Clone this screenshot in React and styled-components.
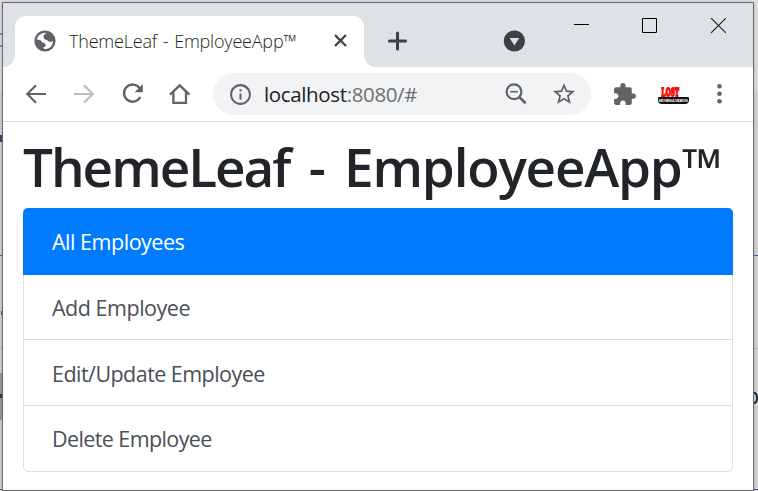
import React from 'react';
import styled, { createGlobalStyle } from 'styled-components';
import { MdExtension, MdStarBorder, MdInfoOutline } from 'react-icons/md';

const GlobalStyle = createGlobalStyle`
  * { box-sizing: border-box; }
  body { margin: 0; overflow: hidden; font-family: "Open Sans", "Noto Sans", sans-serif; }
`;

const Desktop = styled.div`
  position: relative;
  width: 758px;
  height: 491px;
  padding: 2px 4px 0 2px;
  overflow: hidden;
  background: linear-gradient(#e4e3e2 0, #dededd 90px, #d4d4d4 93px, #d4d4d4 100%);
`;

/* Slivers of the page lying behind the browser window. */
const Sliver = styled.span`
  position: absolute;
  left: ${(p) => p.$x}px;
  top: ${(p) => p.$y}px;
  width: ${(p) => p.$w || 2}px;
  height: ${(p) => p.$h || 1}px;
  background: ${(p) => p.$color};
`;

const HiddenLetter = styled.svg`
  position: absolute;
  left: 754px;
  top: 391px;
`;

const Window = styled.main`
  position: relative;
  width: 752px;
  height: 489px;
  border: 1px solid #6a6a6a;
  background: #fff;
  box-shadow: 0 0 5px rgba(0, 0, 0, 0.2);
`;

const TabStrip = styled.header`
  display: flex;
  height: 64px;
  background: #dee1e6;
`;

const Tab = styled.div`
  position: relative;
  display: flex;
  align-items: center;
  width: 349px;
  height: 51px;
  margin: 13px 0 0 12px;
  padding: 0 17px 2px 19px;
  border-radius: 11px 11px 0 0;
  background: #fff;
  &::before,
  &::after {
    content: '';
    position: absolute;
    bottom: 0;
    width: 12px;
    height: 12px;
  }
  &::before {
    left: -12px;
    background: radial-gradient(circle at 0 0, transparent 11.5px, #fff 12.3px);
  }
  &::after {
    right: -12px;
    background: radial-gradient(circle at 100% 0, transparent 11.5px, #fff 12.3px);
  }
`;

const TabTitle = styled.span`
  flex: 1;
  margin-left: 13px;
  font-size: 18px;
  font-weight: 340;
  letter-spacing: -0.2px;
  word-spacing: 1.3px;
  line-height: 24px;
  white-space: nowrap;
  color: #1c1f22;
`;

const NewTab = styled.div`
  margin: 28px 0 0 24px;
  height: 20px;
  line-height: 0;
`;

const TabSearch = styled.div`
  margin: 27px 0 0 96px;
  line-height: 0;
`;

const WindowButtons = styled.div`
  display: flex;
  gap: 53px;
  margin: 15px 0 0 49px;
  line-height: 0;
`;

const Toolbar = styled.nav`
  display: flex;
  align-items: center;
  height: 55px;
  padding-left: 22px;
  border-bottom: 1px solid #d9dbdc;
  color: #5f6368;
  svg { flex: none; display: block; }
`;

const NavIcons = styled.div`
  display: flex;
  gap: 24px;
`;

const Address = styled.div`
  display: flex;
  align-items: center;
  width: 378px;
  height: 42px;
  margin-left: 22px;
  padding: 0 14px 0 15px;
  border-radius: 21px;
  background: #f1f3f4;
`;

const Url = styled.span`
  flex: 1;
  margin-left: 11px;
  font-size: 20.5px;
  line-height: 28px;
  letter-spacing: -0.36px;
  white-space: nowrap;
  color: #6b6f73;
  b { font-weight: 400; color: #202124; }
`;

const AddressIcons = styled.div`
  display: flex;
  align-items: center;
  gap: 24px;
`;

const Extensions = styled.div`
  display: flex;
  align-items: center;
  margin-left: 21px;
`;

const Lost = styled.div`
  display: flex;
  flex-direction: column;
  align-items: center;
  width: 32px;
  height: 20px;
  margin: 1px 28px 0 20px;
`;

const LostName = styled.span`
  height: 12px;
  font: 700 11px/12px "Liberation Serif", serif;
  letter-spacing: 0.3px;
  -webkit-text-stroke: 1.5px #f40d0d;
  color: #f40d0d;
  transform: translate(-3px, 0) scale(0.58, 1.22);
`;

const LostBanner = styled.span`
  width: 31px;
  height: 7px;
  border-radius: 1px 1px 4px 4px;
  background: #111;
  color: #fff;
  font: 700 4px/7px "Liberation Sans", sans-serif;
  letter-spacing: -0.47px;
  text-align: center;
  white-space: nowrap;
`;

const Page = styled.section`
  padding: 15px 20px 0;
`;

const Title = styled.h1`
  margin: 0;
  height: 71px;
  font-size: 53px;
  font-weight: 600;
  line-height: 60px;
  letter-spacing: -2px;
  word-spacing: 7.5px;
  white-space: nowrap;
  color: #212529;
`;

const TitleApp = styled.span`
  margin-left: 1px;
  letter-spacing: -1.2px;
`;

const List = styled.ul`
  width: 710px;
  margin: 0;
  padding: 0;
  list-style: none;
  border: 1px solid #dfdfdf;
  border-top: 0;
  border-radius: 5px;
`;

const Item = styled.li`
  display: flex;
  align-items: center;
  height: ${(p) => p.$h}px;
  margin: ${(p) => (p.$active ? '0 -1px' : '0')};
  padding: ${(p) => p.$drop || 1}px ${(p) => (p.$active ? 29 : 28)}px 0;
  border-radius: ${(p) => (p.$active ? '5px 5px 0 0' : '0')};
  border-bottom: ${(p) => (p.$active || p.$last ? '0' : '1px solid #dfdfdf')};
  background: ${(p) => (p.$active ? '#007bff' : 'transparent')};
  color: ${(p) => (p.$active ? '#fff' : '#495057')};
  font-size: 21.5px;
  line-height: 32px;
  letter-spacing: ${(p) => p.$spacing}px;
`;

const items = [
  { label: 'All Employees', h: 67, spacing: -0.48, active: true },
  { label: 'Add Employee', h: 65, spacing: -0.48 },
  { label: 'Edit/Update Employee', h: 66, spacing: -0.54, drop: 3 },
  { label: 'Delete Employee', h: 65, spacing: -0.6, last: true },
];

const Globe = () => (
  <svg width="22" height="22" viewBox="0 0 22 22">
    <circle cx="11" cy="11" r="10.6" fill="#5f6368" />
    <path d="M2.9 9.8C3.4 5.8 6.7 2.7 11.8 2.7C12 4.4 10.2 4.3 9.6 5.4C9.1 6.6 10.1 7.1 10.2 8.2C10.3 9.3 11.3 9.6 12.6 10.1C13.9 10.7 14.2 11.6 15.7 11.7C17.2 11.8 18 11.3 19.2 11.4C18.7 15.8 15.2 19.2 10.4 19.1L9.1 17.5C11 17.2 11.8 16.3 11.7 14.8C11.6 13 9.9 12.9 8.5 12.4C7 11.9 7.4 10.5 5.9 10.1C5 9.8 4 9.9 2.9 9.8Z" fill="#fff" />
  </svg>
);

const Arrow = ({ forward }) => (
  <svg width="24" height="24" viewBox="0 0 24 24" fill="none" stroke={forward ? '#babcbe' : '#5f6368'} strokeWidth="2.2">
    <path d={forward ? 'M1 12H19.5M11 3.3L19.7 12L11 20.7' : 'M21 12H2.5M11 3.3L2.3 12L11 20.7'} />
  </svg>
);

export default function App() {
  return (
    <Desktop>
      <GlobalStyle />
      <Sliver $x={0} $y={33} $h={2} $color="#6f9bd0" />
      <Sliver $x={0} $y={45} $h={2} $color="#6f9bd0" />
      <Sliver $x={0} $y={135} $h={7} $color="#31506f" />
      <Sliver $x={0} $y={255} $color="#466b98" />
      <Sliver $x={1} $y={311} $h={4} $w={1} $color="#77531f" />
      <Sliver $x={0} $y={348} $color="#b9b9b9" />
      <Sliver $x={0} $y={373} $h={47} $color="#9b9b9b" />
      <Sliver $x={0} $y={394} $h={4} $color="#293d57" />
      <Sliver $x={0} $y={489} $color="#466b98" />
      <Sliver $x={754} $y={255} $w={4} $color="#466b98" />
      <Sliver $x={754} $y={348} $w={4} $color="#bababa" />
      <Sliver $x={754} $y={489} $w={4} $color="#466b98" />
      <Window>
        <TabStrip>
          <Tab>
            <Globe />
            <TabTitle>ThemeLeaf - EmployeeApp™</TabTitle>
            <svg width="13" height="13" viewBox="0 0 13 13" stroke="#3c4043" strokeWidth="2.3">
              <path d="M1 1L12 12M12 1L1 12" />
            </svg>
          </Tab>
          <NewTab>
            <svg width="19" height="20" viewBox="0 0 19 20" stroke="#3c4043" strokeWidth="3" strokeLinecap="round">
              <path d="M1.5 10H17.5M9.5 2V18" />
            </svg>
          </NewTab>
          <TabSearch>
            <svg width="22" height="22" viewBox="0 0 22 22">
              <circle cx="11.4" cy="11" r="10.6" fill="#3c4043" />
              <path d="M6.6 8H16.2L11.4 15.6Z" fill="#dee1e6" />
            </svg>
          </TabSearch>
          <WindowButtons>
            <svg width="15" height="15" viewBox="0 0 15 15"><path d="M0 6.5H15" stroke="#000" /></svg>
            <svg width="15" height="15" viewBox="0 0 15 15"><path d="M.5 .5H14.5V14.5H.5Z" fill="none" stroke="#000" /></svg>
            <svg width="16" height="15" viewBox="0 0 16 15"><path d="M1 0L16 15M16 0L1 15" stroke="#222" strokeWidth="1.1" /></svg>
          </WindowButtons>
        </TabStrip>
        <Toolbar>
          <NavIcons>
            <Arrow />
            <Arrow forward />
            <svg width="24" height="24" viewBox="0 0 24 24" fill="none" stroke="#5f6368" strokeWidth="2.3">
              <path d="M18.7 6.2A8.6 8.6 0 1 0 19.3 15" />
              <path d="M21.8 2V10.2H13.6Z" fill="#5f6368" stroke="none" />
            </svg>
            <svg width="22" height="24" viewBox="0 0 22 24" fill="none" stroke="#5f6368" strokeWidth="2.3">
              <path d="M1 12.6L10.7 3.4L20.4 12.6M4.4 10.3V20.8H17V10.3" />
            </svg>
          </NavIcons>
          <Address>
            <MdInfoOutline size={25} />
            <Url><b>localhost</b>:8080/#</Url>
            <AddressIcons>
              <svg width="22" height="22" viewBox="0 0 22 22" fill="none" stroke="#5f6368" strokeWidth="2.2">
                <circle cx="9" cy="8.7" r="7.4" />
                <path d="M5.2 8.7H12.8" strokeWidth="1.6" />
                <path d="M14.2 14L20.6 20.3" strokeWidth="2.6" />
              </svg>
              <MdStarBorder size={26} />
            </AddressIcons>
          </Address>
          <Extensions>
            <MdExtension size={25} />
            <Lost>
              <LostName>LOST</LostName>
              <LostBanner>MOVIES &amp; VIDEOS</LostBanner>
            </Lost>
            <svg width="5" height="20" viewBox="0 0 5 20" fill="#5f6368">
              <circle cx="2.5" cy="2.3" r="2.3" />
              <circle cx="2.5" cy="9.8" r="2.3" />
              <circle cx="2.5" cy="17.3" r="2.3" />
            </svg>
          </Extensions>
        </Toolbar>
        <Page>
          <Title>ThemeLeaf - <TitleApp>EmployeeApp™</TitleApp></Title>
          <List>
            {items.map((i) => (
              <Item key={i.label} $h={i.h} $spacing={i.spacing} $drop={i.drop} $active={i.active} $last={i.last}>{i.label}</Item>
            ))}
          </List>
        </Page>
      </Window>
      <HiddenLetter width="4" height="14" viewBox="0 0 4 14" fill="none" stroke="#1b2430" strokeWidth="1.8">
        <path d="M0 2C4 2 4 12 0 12" />
      </HiddenLetter>
    </Desktop>
  );
}
